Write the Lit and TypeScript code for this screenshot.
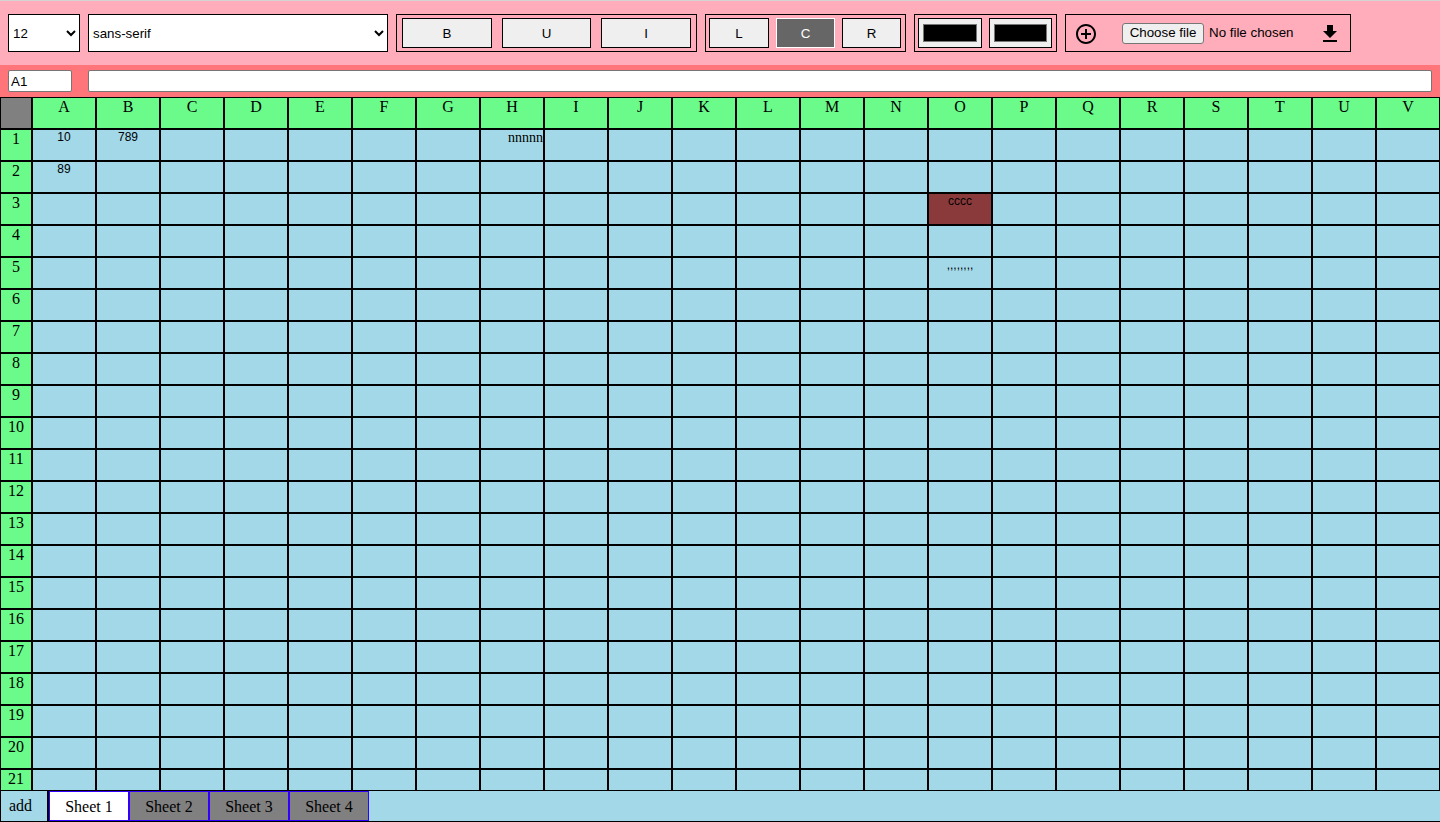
import { LitElement, css, html, svg } from 'lit';
import { customElement } from 'lit/decorators.js';

const COLUMNS = 'ABCDEFGHIJKLMNOPQRSTUV'.split('');
const ROW_COUNT = 21;

type CellData = { text: string; tone?: 'serif' | 'dark' };

const CELLS: Record<string, CellData> = {
  A1: { text: '10' },
  B1: { text: '789' },
  A2: { text: '89' },
  H1: { text: 'nnnnn', tone: 'serif' },
  O3: { text: 'cccc', tone: 'dark' },
  O5: { text: ',,,,,,,,' },
};

const ADD_ICON = svg`<path d="M13 7h-2v4H7v2h4v4h2v-4h4v-2h-4V7zm-1-5C6.48 2 2 6.48 2 12s4.48 10 10 10 10-4.48 10-10S17.52 2 12 2zm0 18c-4.41 0-8-3.59-8-8s3.59-8 8-8 8 3.59 8 8-3.59 8-8 8z"></path>`;
const DOWNLOAD_ICON = svg`<path d="M19 9h-4V3H9v6H5l7 7 7-7zM5 18v2h14v-2H5z"></path>`;

@customElement('app-root')
export class AppRoot extends LitElement {
  static styles = css`
    :host {
      display: flex;
      flex-direction: column;
      height: 822px;
      overflow: hidden;
      font-family: 'Liberation Serif', serif;
      background: #a3d8e9;
    }

    * {
      box-sizing: border-box;
    }

    select,
    button,
    input {
      font-family: 'Liberation Sans', Arial, sans-serif;
      font-size: 13.33px;
      color: #000;
      margin: 0;
    }

    .toolbar {
      display: flex;
      gap: 8px;
      flex: none;
      height: 65px;
      padding: 13px 8px;
      background: #ffadba;
      border-top: 1px solid #d4d4d4;
    }

    .toolbar select {
      height: 38px;
      background: #fff;
      border: 1px solid #000;
      border-radius: 0;
    }

    .size {
      width: 72px;
    }

    .family {
      width: 300px;
    }

    .group {
      display: flex;
      align-items: center;
      height: 38px;
      border: 1px solid #000;
    }

    .style button,
    .align button {
      height: 30px;
      background: #efefef;
      border: 1px solid #000;
      border-radius: 0;
      padding: 0;
    }

    .align button.on {
      background: #666;
      border-color: #fff;
      color: #fff;
    }

    .style {
      display: grid;
      grid-template-columns: repeat(3, 1fr);
      gap: 10px;
      width: 301px;
      padding: 0 5px;
    }

    .align {
      display: grid;
      grid-template-columns: 60px 59px 59px;
      gap: 7px;
      width: 201px;
      padding: 0 4px 0 3px;
    }

    .colors {
      gap: 7px;
      width: 143px;
      padding: 0 4px 0 3px;
    }

    .colors input {
      flex: 1;
      min-width: 0;
      height: 30px;
      border: 1px solid #000;
      background: #efefef;
    }

    .files {
      width: 286px;
      padding-left: 8px;
    }

    .files svg {
      width: 24px;
      height: 24px;
      flex: none;
      margin-top: 2px;
      fill: #000;
    }

    .picker {
      display: flex;
      align-items: center;
      gap: 5px;
      width: 196px;
      margin-left: 24px;
      font: 13.33px 'Liberation Sans', Arial, sans-serif;
    }

    .picker button {
      width: 82px;
      height: 21px;
      padding: 0 0 2px;
      background: #efefef;
      border: 1px solid #767676;
      border-radius: 3px;
    }

    .picker span {
      margin-bottom: 2px;
    }

    .formula {
      display: flex;
      gap: 16px;
      flex: none;
      height: 32px;
      padding: 5px 8px;
      background: #ff7579;
    }

    .formula input {
      height: 22px;
      padding: 1px 2px;
      background: #fff;
      border: 1px solid #767676;
      border-radius: 2px;
    }

    .ref {
      width: 64px;
    }

    .text {
      flex: 1;
    }

    .sheet {
      flex: 1;
      min-height: 0;
      overflow: hidden;
      display: grid;
      grid-template-columns: 32px repeat(22, 64px);
      grid-auto-rows: 32px;
    }

    .cell {
      border: 1px solid #000;
      background: #a3d8e9;
      text-align: center;
      font: 12px 'Liberation Sans', Arial, sans-serif;
      white-space: nowrap;
      overflow: hidden;
    }

    .cell.head {
      background: #6bfb8b;
      font: 16px 'Liberation Serif', serif;
    }

    .cell.corner {
      background: #808080;
    }

    .cell.serif {
      font: 14px 'Liberation Serif', serif;
      text-align: right;
    }

    .cell.dark {
      background: #8b3a3c;
    }

    .tabs {
      display: flex;
      flex: none;
      height: 32px;
      border-top: 1px solid #000;
      border-bottom: 1px solid #000;
      background: #a3d8e9;
      font-size: 16px;
      color: #000;
    }

    .tabs > div {
      width: 80px;
      line-height: 30px;
      text-align: center;
      border: 1px solid #3300ff;
      background: #808080;
    }

    .tabs .add {
      width: 49px;
      padding-left: 8px;
      line-height: 30px;
      text-align: left;
      border: 0;
      border-left: 1px solid #000;
      border-right: 2px solid #000;
      background: none;
    }

    .tabs .current {
      background: #fff;
    }
  `;

  private renderCell(col: string, row: number) {
    const cell = CELLS[`${col}${row}`];
    return html`<div class="cell ${cell?.tone ?? ''}">${cell?.text ?? ''}</div>`;
  }

  private renderRow(row: number) {
    return html`
      <div class="cell head">${row}</div>
      ${COLUMNS.map((col) => this.renderCell(col, row))}
    `;
  }

  render() {
    const rows = Array.from({ length: ROW_COUNT }, (_, i) => i + 1);

    return html`
      <div class="toolbar">
        <select class="size"><option>12</option></select>
        <select class="family"><option>sans-serif</option></select>
        <div class="group style">
          <button>B</button>
          <button>U</button>
          <button>I</button>
        </div>
        <div class="group align">
          <button>L</button>
          <button class="on">C</button>
          <button>R</button>
        </div>
        <div class="group colors">
          <input type="color" value="#000000" />
          <input type="color" value="#000000" />
        </div>
        <div class="group files">
          <svg viewBox="0 0 24 24">${ADD_ICON}</svg>
          <div class="picker">
            <button>Choose file</button>
            <span>No file chosen</span>
          </div>
          <svg viewBox="0 0 24 24">${DOWNLOAD_ICON}</svg>
        </div>
      </div>

      <div class="formula">
        <input class="ref" value="A1" />
        <input class="text" />
      </div>

      <div class="sheet">
        <div class="cell corner"></div>
        ${COLUMNS.map((col) => html`<div class="cell head">${col}</div>`)}
        ${rows.map((row) => this.renderRow(row))}
      </div>

      <div class="tabs">
        <div class="add">add</div>
        <div class="current">Sheet 1</div>
        <div>Sheet 2</div>
        <div>Sheet 3</div>
        <div>Sheet 4</div>
      </div>
    `;
  }
}
